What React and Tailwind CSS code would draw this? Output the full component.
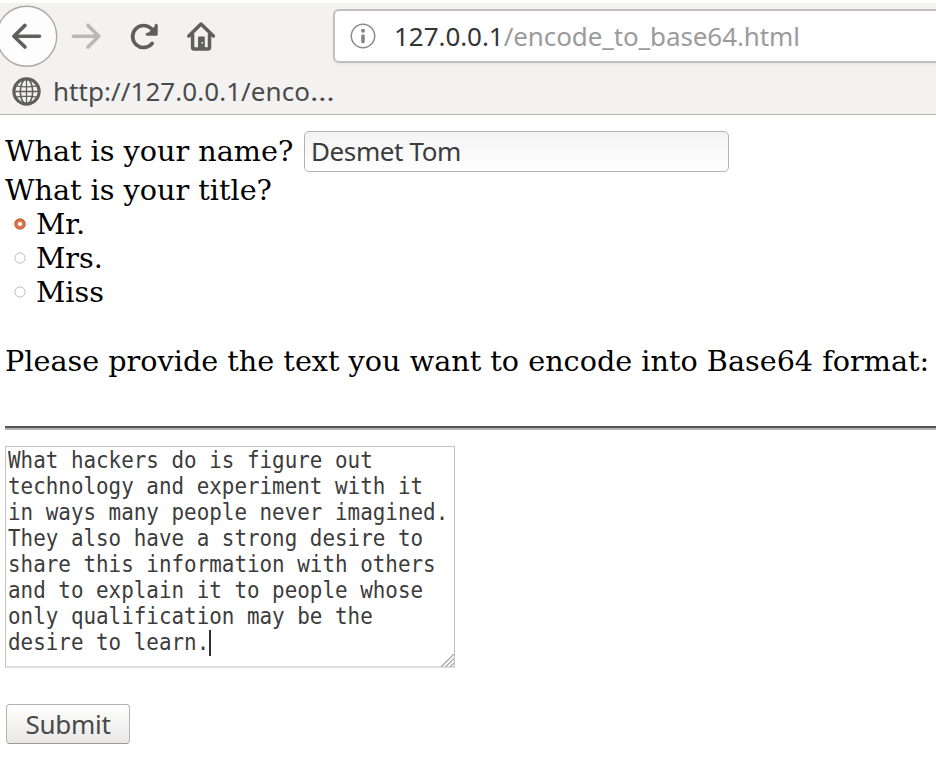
import React from "react";

const ui = "font-['Noto_Sans','Open_Sans',sans-serif] whitespace-pre";

function Radio({ checked, label }) {
  return (
    <div className="flex h-[34.2px] items-center">
      <svg className="ml-[9px] mr-[10px] h-3 w-3 shrink-0" viewBox="0 0 12 12">
        {checked ? (
          <>
            <circle cx="6" cy="6" r="5.7" fill="#c9592f" />
            <circle cx="6" cy="6.3" r="4.5" fill="#dc7450" />
            <circle cx="6" cy="6" r="2.1" fill="#fff" />
          </>
        ) : (
          <circle cx="6" cy="6" r="5.1" fill="#fff" stroke="#bdbdbd" strokeWidth="1" />
        )}
      </svg>
      <span>{label}</span>
    </div>
  );
}

const lines = [
  "What hackers do is figure out",
  "technology and experiment with it",
  "in ways many people never imagined.",
  "They also have a strong desire to",
  "share this information with others",
  "and to explain it to people whose",
  "only qualification may be the",
  "desire to learn.",
];

export default function App() {
  return (
    <div className="h-[767px] w-[936px] overflow-hidden bg-white pt-[3px] font-['DejaVu_Serif',serif] text-[28.67px] leading-[34px] text-black">
      <header className="flex h-[112px] flex-col border-b border-[#b8b7b5] bg-[#f3f2f1]">
        <div className="flex h-[66px] items-center">
          <svg className="h-[66px] w-[230px] shrink-0" viewBox="0 3 230 66" fill="none" strokeLinecap="round" strokeLinejoin="round">
            <circle cx="26.7" cy="36.3" r="30" fill="#fdfdfd" stroke="#aaa9a8" strokeWidth="1.4" />
            <g stroke="#5f5f5d" strokeWidth="3.6">
              <path d="M39.5 36.2H14M25 25.4L13.9 36.2L25 47" />
              <path d="M152.2 43.4A11 11 0 1 1 151.5 28.8" strokeWidth="3.7" />
              <path d="M156.2 25.2V34.2H147.2" strokeWidth="3" />
              <path d="M155.5 27V33.5H149Z" fill="#5f5f5d" strokeWidth="2" />
              <path d="M188.8 36L201 24.1L213.4 36" strokeWidth="3.5" />
              <path d="M192.6 34.5V47.6Q192.6 49 194 49H208Q209.5 49 209.5 47.6V34.5" strokeWidth="3.5" />
            </g>
            <rect x="198" y="36.5" width="6.8" height="11.8" rx="1" fill="#5f5f5d" />
            <rect x="201.5" y="42" width="1.6" height="1.6" fill="#f3f2f1" />
            <path d="M73.4 36.2H98.5M88 25.4L98.8 36.2L88 47" stroke="#b9b8b7" strokeWidth="3.6" />
          </svg>
          <div className={`${ui} ml-[103px] flex h-[54px] w-[620px] shrink-0 items-center rounded-[6px] border-2 border-[#c2bfbc] bg-white text-[26px] text-[#9b9b9b] shadow-[0_2px_3px_rgba(0,0,0,0.05)]`}>
            <svg className="ml-[15px] mr-[18px] h-[26px] w-[26px] shrink-0" viewBox="0 0 26 26">
              <circle cx="13" cy="13" r="11.7" fill="none" stroke="#8c8c8c" strokeWidth="1.5" />
              <circle cx="13" cy="7.8" r="2" fill="#868686" />
              <path d="M13 13V18.6" stroke="#868686" strokeWidth="3.6" strokeLinecap="round" />
            </svg>
            <span className="tracking-[-0.05px] text-[#353535]">127.0.0.1</span>
            <span className="tracking-[-0.1px]">/encode_to_base64.html</span>
          </div>
        </div>
        <div className={`${ui} flex h-[44px] items-center text-[26px] text-[#4a4a4a]`}>
          <svg className="ml-3 mr-[12px] h-[29px] w-[29px] shrink-0" viewBox="0 0 29 29" fill="none" stroke="#5f5f5d">
            <circle cx="14.5" cy="14.5" r="12.6" strokeWidth="3.2" />
            <ellipse cx="14.5" cy="14.5" rx="6.2" ry="12.6" strokeWidth="1.6" />
            <path d="M14.5 2V27M2 14.5H27M4 8.8Q14.5 10.8 25 8.8M4 20.2Q14.5 18.2 25 20.2" strokeWidth="1.3" />
          </svg>
          <span className="tracking-[0.05px]">http://127.0.0.1/enco<span className="inline-block origin-left scale-x-[1.2]">…</span></span>
        </div>
      </header>
      <main className="pl-[5px]">
        <div className="flex pt-4">
          <span className="h-[42px] w-[299px] shrink-0 whitespace-pre leading-[41px]">What is your name?</span>
          <div className={`${ui} flex h-[41px] w-[425px] items-center rounded-[5px] border border-[#b3b3b3] bg-gradient-to-b from-[#f3f3f3] to-white pl-[6px] text-[26px] tracking-[-0.4px] text-[#3c3c3c]`}>
            <span className="-mt-0.5">Desmet Tom</span>
          </div>
        </div>
        <div className="h-[34px]">What is your title?</div>
        <Radio checked label="Mr." />
        <Radio label="Mrs." />
        <Radio label="Miss" />
        <div className="mt-[34px] h-[34px] whitespace-pre">Please provide the text you want to encode into Base64 format:</div>
        <div className="mt-[48px] h-[4px] border-b-2 border-t-2 border-b-[#b5b5b5] border-t-[#555]" />
        <div className="relative mt-4 h-[222px] w-[450px] border border-b-2 border-[#c3c3c3] border-b-[#dedede] pl-[2px] font-['DejaVu_Sans_Mono',monospace] text-[20.9px] leading-[26.1px] text-[#3c3c3c]">
          {lines.map((line, i) => (
            <div key={line} className="flex h-[26.1px] items-center whitespace-pre">
              <span className="inline-block origin-center scale-y-[1.08]">{line}</span>
              {i === 7 && <span className="mt-px h-[26px] w-[2px] bg-[#303030]" />}
            </div>
          ))}
          <svg className="absolute -bottom-px right-0 h-[13px] w-[13px]" viewBox="0 0 13 13" stroke="#a8a8a8" strokeWidth="1.3">
            <path d="M0 13L13 0M4.5 13L13 4.5M9 13L13 9" />
          </svg>
        </div>
        <div className={`${ui} ml-px mt-[36px] flex h-10 w-[124px] items-center justify-center rounded-[4px] border border-[#b5b3b1] border-b-[#9d9b99] bg-gradient-to-b from-[#fefefe] to-[#e9e8e6] text-[26px] tracking-[-0.3px] text-[#4a4a4a]`}>
          <span>Submit</span>
        </div>
      </main>
    </div>
  );
}
